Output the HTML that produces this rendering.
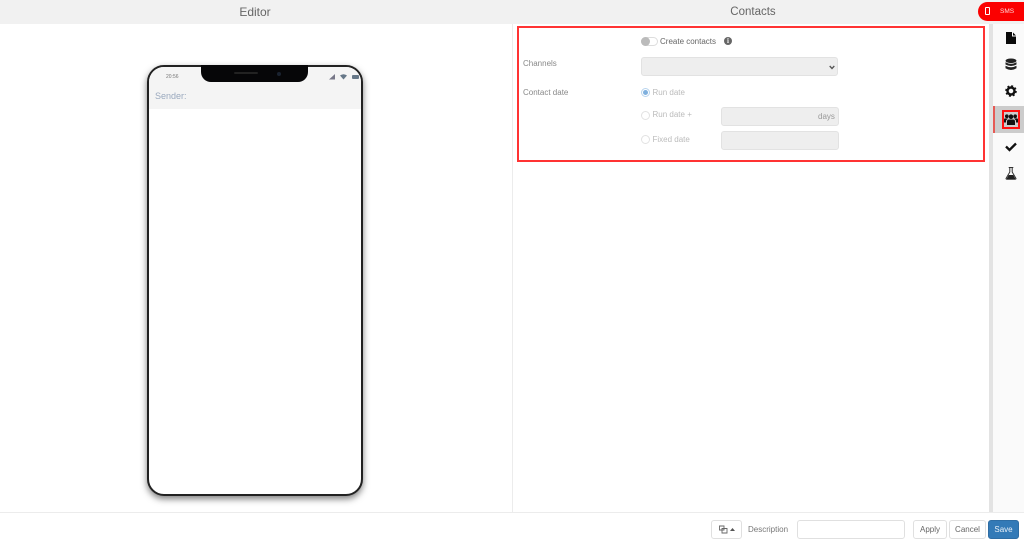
<!DOCTYPE html>
<html><head><meta charset="utf-8"><style>
html,body{margin:0;padding:0;width:1024px;height:543px;overflow:hidden;background:#fff;font-family:"Liberation Sans",sans-serif;color:#555}
div,span,svg{position:absolute;box-sizing:border-box}
.t{white-space:nowrap;font-size:8px;line-height:12px}
.in{background:#eee;border:1px solid #e2e2e2;border-radius:3px}
.r{width:9px;height:9px;border:1px solid #e2e2e2;border-radius:50%;background:#fff}
.b{border:1px solid #e0e0e0;border-radius:3px;background:#fff;font-size:8px;text-align:center;line-height:17px;top:520px;height:19px;color:#666}
</style></head><body>
<div style="left:0;top:0;width:1024px;height:24px;background:#f1f1f1"></div>
<div class="t" style="left:205px;width:100px;text-align:center;top:5px;font-size:12px;line-height:14px;color:#666">Editor</div>
<div class="t" style="left:703px;width:100px;text-align:center;top:5px;font-size:11.500px;line-height:14px;color:#666">Contacts</div>
<div style="left:512px;top:24px;width:1px;height:488px;background:#ececec"></div>
<div style="left:0;top:512px;width:1024px;height:1px;background:#ececec"></div>

<!-- phone -->
<div style="left:147px;top:65px;width:216px;height:431px;border:2px solid #222;border-radius:17px;background:#fff;box-shadow:0 3px 7px rgba(0,0,0,.5);overflow:hidden">
  <div style="left:0;top:0;width:212px;height:42px;background:#f4f4f4"></div>
</div>
<div style="left:201px;top:65px;width:107px;height:17px;background:#060608;border-radius:0 0 10px 10px"></div>
<div style="left:234px;top:72px;width:24px;height:2px;background:#222;border-radius:1px"></div>
<div style="left:277px;top:72px;width:4px;height:4px;background:#1a2230;border-radius:50%"></div>
<div class="t" style="left:166px;top:71px;font-size:5px;color:#777">20:56</div>
<svg style="left:329px;top:74px" width="6" height="6"><path d="M0 5.500L6 0V5.500Z" fill="#778"/></svg>
<svg style="left:340px;top:74px" width="7" height="6"><path d="M0 1.500Q3.500-1 7 1.500L3.500 5.500Z" fill="#678"/></svg>
<div style="left:352px;top:75px;width:7px;height:4px;background:#678;border-radius:1px"></div>
<div class="t" style="left:155px;top:90px;font-size:9px;color:#9aa9be">Sender:</div>

<!-- red box -->
<div style="left:517px;top:26px;width:468px;height:136px;border:2px solid #f33"></div>
<div style="left:641px;top:37px;width:17px;height:9px;border:1px solid #ddd;border-radius:5px;background:#fff"></div>
<div style="left:641px;top:37px;width:9px;height:9px;background:#bbb;border-radius:50%"></div>
<div class="t" style="left:660px;top:36px;color:#666">Create contacts</div>
<div style="left:724px;top:37px;width:8px;height:8px;background:#666;border-radius:50%;color:#fff;font:bold 7px/8px 'Liberation Serif',serif;text-align:center">i</div>
<div class="t" style="left:523px;top:58px;color:#888">Channels</div>
<div class="in" style="left:641px;top:57px;width:197px;height:19px"></div>
<svg style="left:829px;top:65px" width="6" height="5"><path d="M.7 1L3 3.500 5.300 1" fill="none" stroke="#555" stroke-width="1.300"/></svg>
<div class="t" style="left:523px;top:87px;color:#888">Contact date</div>
<div class="r" style="left:641px;top:88px;border-color:#b8d4ee"></div>
<div style="left:643px;top:90px;width:5px;height:5px;border-radius:50%;background:#7fb0de"></div>
<div class="t" style="left:652.500px;top:87px;color:#bbb">Run date</div>
<div class="r" style="left:641px;top:111px"></div>
<div class="t" style="left:652.500px;top:109px;color:#bbb">Run date +</div>
<div class="in" style="left:721px;top:107px;width:118px;height:19px"></div>
<div class="t" style="left:818px;top:111px;color:#999">days</div>
<div class="r" style="left:641px;top:135px"></div>
<div class="t" style="left:652.500px;top:134px;color:#bbb">Fixed date</div>
<div class="in" style="left:721px;top:131px;width:118px;height:19px"></div>

<!-- sidebar -->
<div style="left:989px;top:24px;width:4px;height:488px;background:#e3e3e3"></div>
<div style="left:993px;top:24px;width:31px;height:488px;background:#fafafa"></div>
<div style="left:993px;top:106px;width:31px;height:27px;background:#ccc"></div>
<div style="left:993px;top:106px;width:2px;height:27px;background:#e65a55"></div>
<div style="left:1002px;top:110px;width:18px;height:19px;border:2px solid #f11"></div>
<svg style="left:1004px;top:32px" width="14" height="14"><path d="M2 0H8V4.500H12V12H2ZM9 .5L12 3.500H9Z" fill="#0a0a0a"/></svg>
<svg style="left:1004px;top:58px" width="14" height="14"><ellipse cx="7" cy="2.800" rx="5.500" ry="2.300" fill="#222"/><path d="M1.500 4.300Q7 7.500 12.500 4.300V6.500Q7 9.500 1.500 6.500ZM1.500 7.800Q7 10.800 12.500 7.800V10.300Q7 13.800 1.500 10.300Z" fill="#222"/></svg>
<svg style="left:1005px;top:85px" width="12" height="12"><circle cx="6" cy="6" r="3.500" fill="none" stroke="#111" stroke-width="2.400"/><circle cx="6" cy="6" r="5" fill="none" stroke="#111" stroke-width="1.600" stroke-dasharray="2 1.930"/></svg>
<svg style="left:1004px;top:113px" width="14" height="13"><circle cx="7" cy="3.700" r="2.300" fill="#111"/><circle cx="2.800" cy="3.200" r="1.800" fill="#111"/><circle cx="11.200" cy="3.200" r="1.800" fill="#111"/><path d="M3 12V8.500Q3 6.500 5 6.500H9Q11 6.500 11 8.500V12ZM0 9.500V6.500Q0 5.400 1.200 5.400H4L2 7.500V9.500ZM14 9.500V6.500Q14 5.400 12.800 5.400H10L12 7.500V9.500Z" fill="#111"/></svg>
<svg style="left:1005px;top:142px" width="12" height="10"><path d="M1 4.500L4.500 8 11 1.500" fill="none" stroke="#111" stroke-width="2.300"/></svg>
<svg style="left:1005px;top:167px" width="12" height="13"><path d="M3.700 .5H8.300M4.800 1V5L1 11.500Q1 12.200 2 12.200H10Q11 12.200 11 11.500L7.200 5V1" fill="none" stroke="#333" stroke-width="1"/><path d="M3.700 8H8.300L10.500 12H1.500Z" fill="#222"/></svg>

<!-- SMS -->
<div style="left:978px;top:2px;width:46px;height:19px;background:#fb0000;border-radius:10px 0 0 10px"></div>
<div style="left:985px;top:7px;width:5px;height:8px;border:1px solid #fff;border-radius:1px"></div>
<div class="t" style="left:1000px;top:6px;font-size:6.500px;color:#ffd9d9">SMS</div>

<!-- footer -->
<div class="b" style="left:711px;width:31px"></div>
<svg style="left:719px;top:525px" width="9" height="9"><path d="M.5 1H5V5H.5ZM3 3.500H8V8H3Z" fill="none" stroke="#666" stroke-width=".9"/></svg>
<svg style="left:730px;top:528px" width="5" height="3"><path d="M0 3L2.500 0 5 3Z" fill="#555"/></svg>
<div class="t" style="left:748px;top:524px;color:#777">Description</div>
<div class="b" style="left:797px;width:108px"></div>
<div class="b" style="left:913px;width:34px">Apply</div>
<div class="b" style="left:949px;width:37px">Cancel</div>
<div class="b" style="left:988px;width:31px;background:#337ab7;border-color:#2e6da4;color:#e8f0f8">Save</div>
</body></html>
